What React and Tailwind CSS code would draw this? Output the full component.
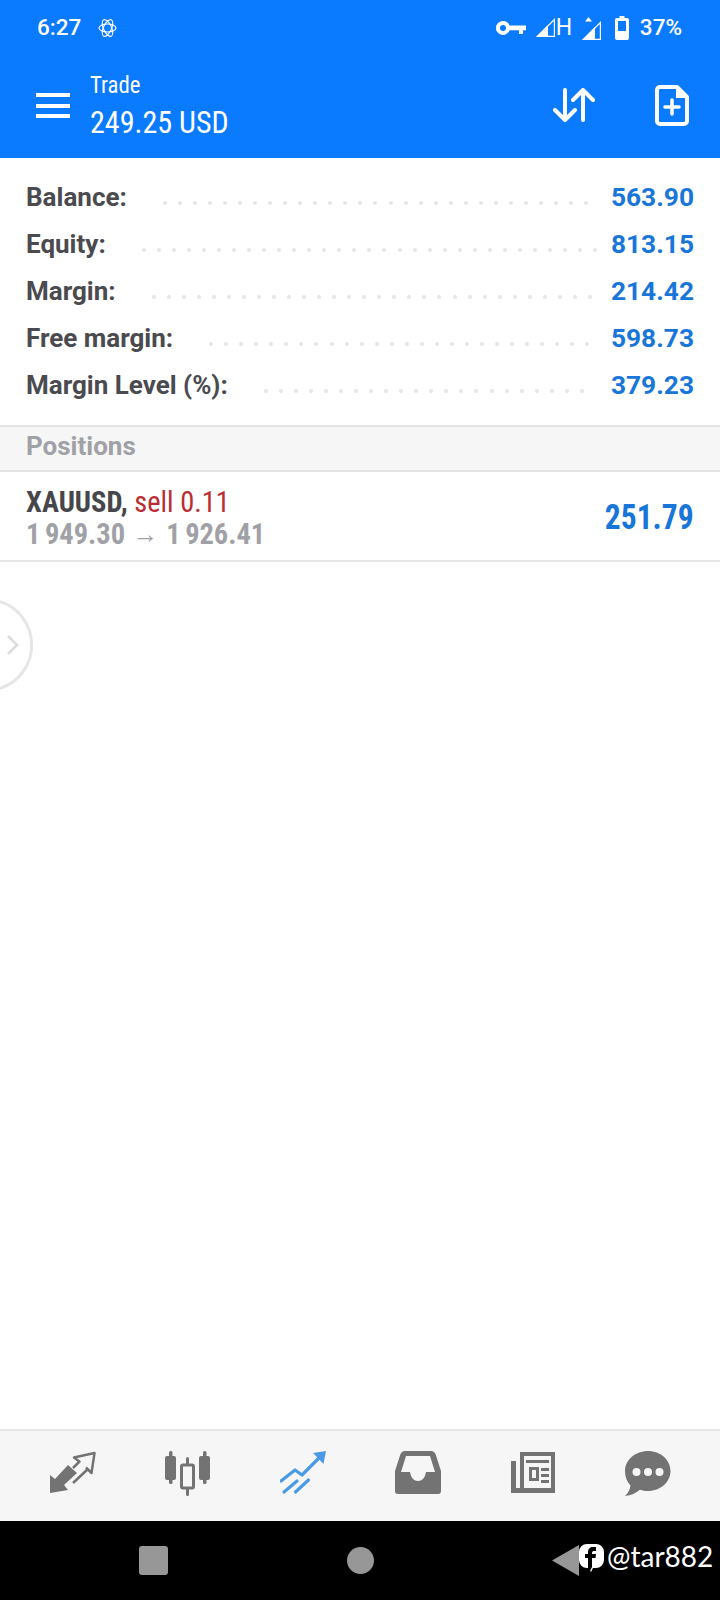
import React from "react";

const rows = [
  { label: "Balance:", value: "563.90", dots: 29 },
  { label: "Equity:", value: "813.15", dots: 31 },
  { label: "Margin:", value: "214.42", dots: 30 },
  { label: "Free margin:", value: "598.73", dots: 26 },
  { label: "Margin Level (%):", value: "379.23", dots: 22 },
];

const StatusBar = () => (
  <div className="h-[63px] flex items-center pl-[37px] pr-[38px] pb-[8px] text-white text-[22.500px] font-medium">
    <span className="w-[44px]">6:27</span>
    <svg className="ml-[17px]" width="19" height="20" viewBox="0 0 19 20" fill="none" stroke="white" strokeWidth="1.1">
      <ellipse cx="9.500" cy="10" rx="4" ry="9" transform="rotate(-25 9.500 10)" />
      <ellipse cx="9.500" cy="10" rx="4" ry="9" transform="rotate(25 9.500 10)" />
      <ellipse cx="9.500" cy="10" rx="4" ry="8.500" transform="rotate(90 9.500 10)" />
    </svg>
    <div className="ml-auto flex items-center">
      <svg width="30" height="14" viewBox="0 0 30 14" fill="white">
        <path fillRule="evenodd" d="M7 0a7 7 0 0 1 6.600 4.600H30v4.600h-3v3.800h-4V9.200h-9.400A7 7 0 1 1 7 0zm0 4a3 3 0 1 0 0 6 3 3 0 0 0 0-6z" />
      </svg>
      <svg className="ml-[10px]" width="19" height="19" viewBox="0 0 19 19" fill="white">
        <path d="M12 7v12H0z" />
        <path d="M18.400 1.500V18.400H1.500z" fill="none" stroke="white" strokeWidth="1.200" />
      </svg>
      <span className="ml-[1px] w-[16px] text-[23px] font-normal leading-none">H</span>
      <svg className="ml-[10px]" width="19" height="24" viewBox="0 0 19 24" fill="white">
        <path d="M3 5.500 6.500 1 10 5.500z" />
        <path d="M13 11v13H0z" />
        <path d="M18.400 6.500V23.400H1.500z" fill="none" stroke="white" strokeWidth="1.200" />
      </svg>
      <svg className="ml-[14px]" width="14" height="24" viewBox="0 0 14 24" fill="white">
        <path fillRule="evenodd" d="M4.500 0h5v2H12a2 2 0 0 1 2 2v18a2 2 0 0 1-2 2H2a2 2 0 0 1-2-2V4a2 2 0 0 1 2-2h2.500zM3 5v10h8V5z" />
      </svg>
      <span className="ml-[11px]">37%</span>
    </div>
  </div>
);

const Header = () => (
  <div className="h-[95px] flex items-start pl-[36px] pr-[31px] text-white">
    <div className="mt-[30px] w-[34px] flex flex-col gap-[6.500px]">
      <div className="h-[4px] bg-white"></div>
      <div className="h-[4px] bg-white"></div>
      <div className="h-[4px] bg-white"></div>
    </div>
    <div className="ml-[20px] mt-[7px] [font-stretch:75%] font-[450]">
      <div className="text-[23.500px] leading-[30px] origin-left scale-x-[0.97] whitespace-nowrap">Trade</div>
      <div className="mt-[4px] text-[31px] leading-[38px] origin-left scale-x-[0.97] whitespace-nowrap">249.25 USD</div>
    </div>
    <svg className="ml-auto mt-[25px]" width="42" height="34" viewBox="0 0 42 34" fill="none" stroke="white" strokeWidth="4" strokeLinecap="round" strokeLinejoin="round">
      <path d="M12 2v30M2 22l10 10 10-10" />
      <path d="M30 32V2M20 12 30 2l10 10" />
    </svg>
    <svg className="ml-[60px] mt-[22px]" width="34" height="41" viewBox="0 0 34 41" fill="none">
      <path d="M5 2h17l10 10v24a3 3 0 0 1-3 3H5a3 3 0 0 1-3-3V5a3 3 0 0 1 3-3z" stroke="white" strokeWidth="4" strokeLinejoin="round" />
      <path d="M21 2v11h11z" fill="white" />
      <path d="M17 15v14M10 22h14" stroke="white" strokeWidth="3.500" strokeLinecap="round" />
    </svg>
  </div>
);

const NavIcon = ({ children, color = "#737373" }) => (
  <div className="flex items-center justify-center">
    <svg width="46" height="46" viewBox="0 0 46 46" fill={color} stroke="none">
      {children}
    </svg>
  </div>
);

const BottomNav = () => (
  <div className="h-[92px] bg-[#f6f6f6] border-t-2 border-[#e6e6e6] grid grid-cols-6 pl-[15px] pr-[15px] pt-[20px] items-start">
    <NavIcon>
      <path d="M0 24l5 4L18 14l9 8-13 12 4 5-18 3z" />
      <path d="M30 11l-6-4.500L44.500 2l-3 20-5.500-5.500" fill="none" stroke="#737373" strokeWidth="2.500" strokeLinejoin="round" />
      <path d="M23 17l7-7M23 32l15-14" fill="none" stroke="#737373" strokeWidth="2.500" />
    </NavIcon>
    <NavIcon>
      <rect x="0" y="5" width="11" height="24" rx="2" />
      <rect x="4" y="0" width="3.500" height="33" rx="1.500" />
      <rect x="34" y="5" width="11" height="24" rx="2" />
      <rect x="38" y="0" width="3.500" height="33" rx="1.500" />
      <rect x="16.500" y="14" width="12" height="23" rx="1.500" fill="none" stroke="#737373" strokeWidth="3" />
      <rect x="21" y="6" width="3" height="8" rx="1.500" />
      <rect x="21" y="37" width="3" height="8" rx="1.500" />
    </NavIcon>
    <NavIcon>
      <g fill="none" stroke="#4a9ae8" strokeWidth="3.200" strokeLinecap="round" strokeLinejoin="round">
        <path d="M1 30 15 19l7 5L41 5" />
        <path d="M4 41l13-11M15.500 41l13-12" />
      </g>
      <path d="M33 2 46 0l-2.500 13z" fill="#4a9ae8" />
    </NavIcon>
    <NavIcon>
      <path fillRule="evenodd" d="M10 0h26c2 0 3.500 1 4.500 3L46 20v20a3 3 0 0 1-3 3H3a3 3 0 0 1-3-3V20L5.500 3C6.500 1 8 0 10 0zm1 5L6 21h9c1 6 4 9 8 9s7-3 8-9h9L35 5z" />
    </NavIcon>
    <NavIcon>
      <path fillRule="evenodd" d="M10 1h35v41H1V10h5v27h4zm4 4v32h27V5zM16 9h23v3H16zm3 7h10v14H19zm3 3v8h4v-8zM31 17h8v3h-8zm0 6h8v3h-8zm0 6h8v3h-8z" />
    </NavIcon>
    <NavIcon>
      <path d="M23 0c12.500 0 22.500 8.800 22.500 20S35.500 40 23 40c-3 0-5.500-.4-8-1.300C11 42 6 44.500 0 45c3-3 5-6.500 5.500-10.500C2 31 0 26 0 20 0 8.800 10.500 0 23 0z" />
      <circle cx="11.500" cy="21" r="4" fill="#f6f6f6" />
      <circle cx="23" cy="21" r="4" fill="#f6f6f6" />
      <circle cx="34.500" cy="21" r="4" fill="#f6f6f6" />
    </NavIcon>
  </div>
);

const SystemBar = () => (
  <div className="relative h-[79px] bg-black flex items-center justify-between pl-[139px] pr-[141px]">
    <div className="w-[29px] h-[29px] rounded-[3px] bg-[#979797]"></div>
    <div className="w-[27px] h-[27px] rounded-full bg-[#979797]"></div>
    <svg width="27" height="31" viewBox="0 0 27 31" fill="#979797">
      <path d="M27 0v31L0 15.500z" />
    </svg>
    {/* watermark */}
    <div className="absolute left-[579px] top-[23px] flex items-center text-white">
      <svg width="25" height="28" viewBox="0 0 25 28">
        <path d="M8 0h9a8 8 0 0 1 8 8v8a8 8 0 0 1-8 8h-3l-2 4-3-4H8a8 8 0 0 1-8-8V8a8 8 0 0 1 8-8z" fill="white" />
        <path d="M9 27V14H6v-4h3V8c0-3 2-5 5-5h3v4h-2c-1 0-2 .5-2 2v1h4l-.5 4H13v9l-2 4z" fill="black" />
      </svg>
      <span className="ml-[3px] -mt-[4px] text-[28px] leading-none [font-family:Lato,sans-serif]">@tar882</span>
    </div>
  </div>
);

const App = () => {
  return (
    <div className="w-[720px] h-[1600px] flex flex-col bg-white [font-family:Roboto,sans-serif]">
      <div className="bg-[#0a7aff]">
        <StatusBar />
        <Header />
      </div>

      <div className="relative flex-1">
        <div className="pt-[16px] pb-[16px]">
          {rows.map((row) => (
            <div key={row.label} className="h-[47px] flex items-center pl-[26px] pr-[26px] font-bold">
              <span className="text-[26px] text-[#4a4a4f] whitespace-nowrap">{row.label}</span>
              <div className="ml-[36px] mt-[11px] flex gap-[11.050px]">
                {Array.from({ length: row.dots }).map((_, i) => (
                  <span key={i} className="w-[4px] h-[4px] rounded-full bg-[#e6e6e6]"></span>
                ))}
              </div>
              <span className="ml-auto text-[26.300px] text-[#1976d9]">{row.value}</span>
            </div>
          ))}
        </div>

        <div className="h-[47px] bg-[#f6f6f6] border-y-2 border-[#e4e4e4] flex items-center pl-[26px] pb-[4px] text-[26px] font-bold text-[#a0a1a6]">
          Positions
        </div>

        <div className="h-[90px] border-b-2 border-[#e6e6e6] flex items-center pl-[26px] pr-[26px]">
          <div className="pt-[3px] text-[29px] leading-[32px] font-bold [font-stretch:75%] origin-left scale-x-[0.98] whitespace-nowrap">
            <div>
              <span className="text-[#47474b]">XAUUSD, </span>
              <span className="text-[#b92d33] font-normal">sell 0.11</span>
            </div>
            <div className="flex items-center text-[#a0a1a6]">
              <span className="[word-spacing:-2px]">1 949.30</span>
              <span className="mx-[8px] font-normal text-[26px]">→</span>
              <span className="[word-spacing:-2px]">1 926.41</span>
            </div>
          </div>
          <span className="ml-auto mt-[5px] inline-block text-[35px] font-bold [font-stretch:75%] text-[#1976d9] origin-right scale-x-[0.9]">251.79</span>
        </div>

        {/* side drawer handle */}
        <svg className="absolute left-0 top-[440px]" width="34" height="94" viewBox="0 0 34 94" fill="none">
          <path d="M0 3.800A44 45 0 0 1 0 90.200" stroke="#e6e6e6" strokeWidth="3" />
          <path d="M8 38l9 9-9 9" stroke="#dcdcdc" strokeWidth="2.500" />
        </svg>
      </div>

      <BottomNav />
      <SystemBar />
    </div>
  );
};

export default App;
